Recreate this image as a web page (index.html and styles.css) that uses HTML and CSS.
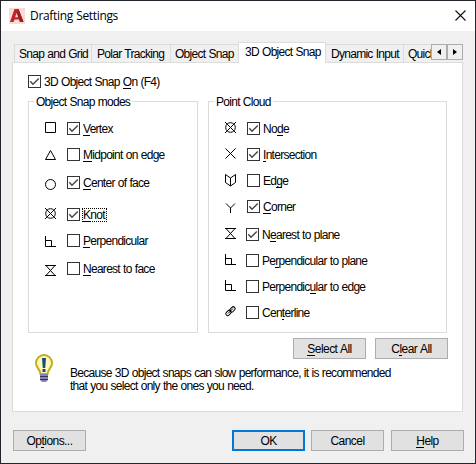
FILE: index.html
```html
<!DOCTYPE html>
<html lang="en">
<head>
<meta charset="utf-8">
<title>Drafting Settings</title>
<link rel="stylesheet" href="styles.css">
</head>
<body>
<svg class="defs" width="0" height="0">
  <defs>
    <symbol id="check" viewBox="0 0 13 13"><path d="M2.300 6.200L5 9.200 10.800 3.400" fill="none" stroke="#444" stroke-width="1.400"/></symbol>
    <g id="square"><path d="M.5 .5h10v10H.5z"/></g>
    <g id="triangle"><path d="M5.500 .5l5 9H.5z"/></g>
    <g id="circle"><circle cx="5.500" cy="5.500" r="5"/></g>
    <g id="node"><circle cx="5.500" cy="5.500" r="4.800"/><path d="M0 0l11 11M11 0L0 11"/></g>
    <g id="cross"><path d="M.5 .5l10 10M10.500 .5l-10 10"/></g>
    <g id="perp"><path d="M.5 0v10.500H11M.5 4.500h6v6"/></g>
    <g id="nearest"><path d="M0 .5h11M0 10.500h11M1 .5l9 10M10 .5l-9 10"/></g>
    <g id="edge"><path d="M.5 .5v8l5 3.500 5-3.500v-8L5.500 4zM5.500 4v8"/></g>
    <g id="corner"><path d="M1 .5l4.500 4.500 4.500-4.500M5.500 5V10"/></g>
    <g id="link"><rect x="4.500" y="1.500" width="6" height="3.800" rx="1.900" transform="rotate(-45 7.500 3.400)"/><rect x=".5" y="5" width="6" height="3.800" rx="1.900" transform="rotate(-45 3.500 6.900)"/><path d="M3 7.500l5-5"/></g>
  </defs>
</svg>
<div class="window">
  <header class="titlebar">
    <svg class="logo" width="16" height="16" viewBox="0 0 16 16"><path fill="#f7dcd6" d="M0 0h16v16H0z"/><path fill="#c3222b" d="M5.500 1h4L14.500 14h-3.800l-.8-2.500H5.600L4.500 14H1z"/><path fill="#9c1b24" d="M9.500 1l5 13h-2.800L8 3.500z"/><path fill="#f7dcd6" d="M7.500 5l1.600 4.300H6.200z"/></svg>
    <h1>Drafting Settings</h1>
    <svg class="close" width="11" height="11" viewBox="0 0 11 11"><path d="M.5 .5l10 10M10.500 .5l-10 10" stroke="#111" stroke-width="1.100"/></svg>
  </header>
  <main>
    <nav class="tabs">
      <div class="tab t1">Snap and Grid</div>
      <div class="tab t2">Polar Tracking</div>
      <div class="tab t3">Object Snap</div>
      <div class="tab active">3D Object Snap</div>
      <div class="tab t5">Dynamic Input</div>
      <div class="tab t6">Quick</div>
      <div class="scroll"><i><svg width="4" height="6"><path d="M4 0v6L0 3z"/></svg></i><i><svg width="4" height="6"><path d="M0 0v6l4-3z"/></svg></i></div>
    </nav>
    <section class="panel">
      <label class="row master"><span class="box"><svg><use href="#check"/></svg></span><span class="text">3D Object Snap <u>O</u>n (F4)</span></label>
      <div class="groups">
        <div class="group modes">
          <h2>Object Snap modes</h2>
          <label class="row g0"><svg class="icon"><use href="#square"/></svg><span class="box"><svg><use href="#check"/></svg></span><span class="text"><u>V</u>ertex</span></label>
          <label class="row g13"><svg class="icon d2"><use href="#triangle"/></svg><span class="box"></span><span class="text"><u>M</u>idpoint on edge</span></label>
          <label class="row g15"><svg class="icon d3"><use href="#circle"/></svg><span class="box"><svg><use href="#check"/></svg></span><span class="text"><u>C</u>enter of face</span></label>
          <label class="row g19"><svg class="icon"><use href="#node"/></svg><span class="box"><svg><use href="#check"/></svg></span><span class="text focus"><u>K</u>not</span></label>
          <label class="row g13"><svg class="icon d2"><use href="#perp"/></svg><span class="box"></span><span class="text"><u>P</u>erpendicular</span></label>
          <label class="row g15"><svg class="icon d3"><use href="#nearest"/></svg><span class="box"></span><span class="text"><u>N</u>earest to face</span></label>
        </div>
        <div class="group cloud">
          <h2>Point Cloud</h2>
          <label class="row g0"><svg class="icon"><use href="#node"/></svg><span class="box"><svg><use href="#check"/></svg></span><span class="text">No<u>d</u>e</span></label>
          <label class="row g13"><svg class="icon"><use href="#cross"/></svg><span class="box"><svg><use href="#check"/></svg></span><span class="text"><u>I</u>ntersection</span></label>
          <label class="row g13"><svg class="icon"><use href="#edge"/></svg><span class="box"></span><span class="text">Ed<u>g</u>e</span></label>
          <label class="row g13"><svg class="icon d3"><use href="#corner"/></svg><span class="box"><svg><use href="#check"/></svg></span><span class="text"><u>C</u>orner</span></label>
          <label class="row g15 near"><svg class="icon"><use href="#nearest"/></svg><span class="box"><svg><use href="#check"/></svg></span><span class="text">N<u>e</u>arest to plane</span></label>
          <label class="row g13 near"><svg class="icon"><use href="#perp"/></svg><span class="box"></span><span class="text">Pe<u>r</u>pendicular to plane</span></label>
          <label class="row g13 near"><svg class="icon"><use href="#perp"/></svg><span class="box"></span><span class="text">Perpendic<u>u</u>lar to edge</span></label>
          <label class="row g13 near"><svg class="icon"><use href="#link"/></svg><span class="box"></span><span class="text">Cen<u>t</u>erline</span></label>
        </div>
      </div>
      <div class="actions"><button><u>S</u>elect All</button><button>C<u>l</u>ear All</button></div>
      <div class="note">
        <svg class="bulb" width="20" height="29" viewBox="0 0 20 29"><path d="M10 1a8 8 0 0 0-8 8c0 5 4 6 4.500 11h7C14 15 18 14 18 9a8 8 0 0 0-8-8z" fill="#fff9b8" stroke="#c0ad20" stroke-width="2"/><path d="M8 4h4l-.8 10H8.800zM8.500 15h3v3h-3z" fill="#174b80"/><path d="M6 20h8v6l-2 2H8l-2-2z" fill="#8585b5"/><path d="M6 22.500h8M6 25.500h8" stroke="#333355"/></svg>
        <p>Because 3D object snaps can slow performance, it is recommended<br>that you select only the ones you need.</p>
      </div>
    </section>
    <footer><button>Op<u>t</u>ions...</button><button class="ok">OK</button><button>Cancel</button><button class="help"><u>H</u>elp</button></footer>
  </main>
</div>
</body>
</html>
```
FILE: styles.css
```css
* { box-sizing: border-box; }
body { margin: 0; font: 12px/14px "Liberation Sans", sans-serif; letter-spacing: -.72px; word-spacing: .5px; color: #000; }
.defs { position: absolute; }
.window { width: 476px; height: 464px; border: 1px solid #22252b; background: #f0f0f0; overflow: hidden; }
.titlebar { height: 30px; background: #fff; display: flex; align-items: center; padding: 0 9px 0 8px; }
.close { margin-bottom: 2px; }
h1 { font: 12px/20px "Open Sans", sans-serif; letter-spacing: -.33px; margin: 0 auto 0 5px; }
h2 { font: inherit; margin: 0; }
svg { display: block; }
u { text-decoration: none; box-shadow: 0 -1px #000 inset; }
main { padding: 11px 12px 0 11px; }
.tabs { height: 20px; display: flex; align-items: flex-end; padding-left: 2px; position: relative; z-index: 1; }
.tab { height: 18px; border: 1px solid #dcdcdc; border-width: 1px 0 0 1px; white-space: nowrap; padding: 2px 0 0 4px; overflow: hidden; flex: none; }
.t1 { width: 77px; }
.t2 { width: 79px; padding-left: 5px; }
.t3 { width: 68px; }
.active { width: 88px; height: 21px; margin-bottom: -1px; background: #fff; border-right-width: 1px; padding: 2px 0 0 6px; }
.t5 { width: 77px; border-left: 0; padding-left: 5px; }
.t6 { width: 28px; }
.scroll { display: flex; margin-left: auto; height: 16px; align-self: flex-start; margin-top: 2px; }
.scroll i { width: 16px; height: 16px; border: 1px solid #adadad; display: grid; place-items: center; }
.panel { height: 350px; background: #fff; border: 1px solid #dcdcdc; padding: 12px 14px 0 15px; }
.row { display: flex; height: 13px; align-items: flex-start; }
.box { width: 13px; height: 13px; border: 1px solid #333; flex: none; }
.box svg { width: 13px; height: 13px; margin: -1px; }
.text { padding-left: 3px; white-space: nowrap; }
.icon { width: 11px; height: 13px; margin-right: 11px; overflow: visible; fill: none; stroke: #000; stroke-width: 1; flex: none; }
.d2 { margin-top: 2px; }
.d3 { margin-top: 3px; }
.groups { display: flex; gap: 10px; margin-top: 13px; }
.group { height: 232px; border: 1px solid #dcdcdc; padding-left: 16px; flex: none; }
.modes { width: 170px; }
.cloud { width: 239px; }
.group h2 { width: max-content; background: #fff; margin: -7px 0 13px -11px; padding: 0 2px; }
.g13 { margin-top: 13px; }
.g15 { margin-top: 15px; }
.g19 { margin-top: 19px; }
.near .icon { margin-right: 10px; }
.focus { padding: 0 2px 0 1px; margin-left: 2px; outline: 1px dotted #000; outline-offset: -1px; }
button { width: 73px; height: 21px; border: 1px solid #adadad; background: #e1e1e1; font: inherit; letter-spacing: -.55px; word-spacing: inherit; padding: 0; color: #000; }
.actions { display: flex; justify-content: flex-end; gap: 9px; margin-top: 5px; }
.note { display: flex; padding: 0 0 0 6px; margin-top: -5px; }
.note p { margin: 13px 0 0 16px; line-height: 13px; white-space: nowrap; }
footer { display: flex; gap: 6px; margin: 18px -1px 0 0; padding-left: 1px; }
footer button:first-child { margin-right: auto; }
.help { margin-left: 1px; }
.ok { border: 2px solid #0078d7; }
```
